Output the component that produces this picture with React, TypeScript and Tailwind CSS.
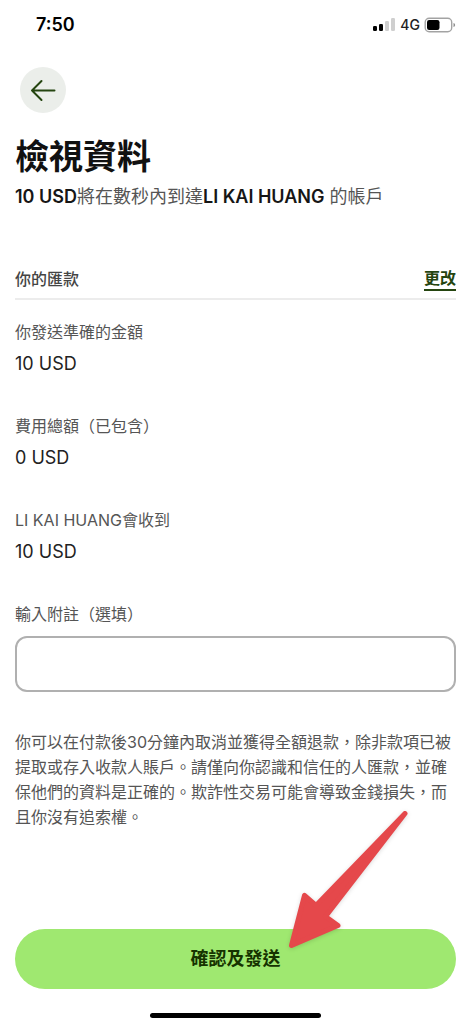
import { useState } from "react";

const DETAILS = [
  { label: "你發送準確的金額", value: "10 USD" },
  { label: "費用總額（已包含）", value: "0 USD" },
  { label: "LI KAI HUANG會收到", value: "10 USD" },
];

function StatusBar() {
  return (
    <div className="flex h-[50px] items-center justify-between pl-9 pr-3">
      <span className="text-lg font-semibold text-black">7:50</span>
      <div className="flex items-center gap-1">
        <svg width="24" height="14" viewBox="0 0 24 14" aria-hidden="true">
          <rect x="1" y="8" width="4" height="5" rx="1.2" fill="#000" />
          <rect x="7" y="6" width="4" height="7" rx="1.2" fill="#000" />
          <rect x="13" y="3" width="4" height="10" rx="1.2" fill="#cfcfcf" />
          <rect x="19" y="0" width="4" height="13" rx="1.2" fill="#cfcfcf" />
        </svg>
        <span className="text-sm font-medium text-[#222]">4G</span>
        <svg width="32" height="16" viewBox="0 0 32 16" aria-hidden="true">
          <rect x="1.2" y="1.2" width="26.5" height="13.6" rx="4" fill="none" stroke="#a3a3a3" strokeWidth="1.4" />
          <rect x="3" y="3" width="12.5" height="10" rx="2.2" fill="#000" />
          <path d="M29.5 6v4c1-.4 1.6-1.1 1.6-2s-.6-1.600-1.600-2z" fill="#8f8f8f" />
        </svg>
      </div>
    </div>
  );
}

function Pointer() {
  return (
    <svg
      className="pointer-events-none absolute bottom-10 left-[62%] h-[138px] w-[122px] drop-shadow-sm"
      viewBox="0 0 122 138"
      aria-hidden="true"
    >
      <path
        d="M117 2.500L28 94.500L16.500 84.500L3.500 134.500L50 114.500L37.500 105.500Z"
        fill="#e5484b"
        stroke="#e5484b"
        strokeWidth="5"
        strokeLinejoin="round"
      />
    </svg>
  );
}

export default function App() {
  const [note, setNote] = useState("");

  return (
    <div className="flex min-h-screen flex-col bg-white font-['Inter','Noto_Sans_CJK_TC',sans-serif] text-[#555]">
      <StatusBar />

      <main className="flex flex-col pl-[15px] pr-3">
        <button
          type="button"
          aria-label="返回"
          className="ml-[5px] mt-[17px] flex size-[46px] items-center justify-center rounded-full bg-[#ebeeea]"
        >
          <svg
            width="26"
            height="24"
            viewBox="0 0 26 24"
            fill="none"
            stroke="#254510"
            strokeWidth="2"
            strokeLinecap="round"
            strokeLinejoin="round"
            aria-hidden="true"
          >
            <path d="M24.500 12.500H2M11.500 3L2 12.500l9.500 9.500" />
          </svg>
        </button>

        <h1 className="mt-6 text-[34px] font-bold leading-10 text-[#111]">檢視資料</h1>
        <p className="mt-1.5 text-lg leading-7">
          <strong className="font-semibold text-[#161616]">10 USD</strong>
          將在數秒內到達
          <strong className="font-semibold text-[#161616]">LI KAI HUANG</strong> 的帳戶
        </p>

        <div className="mt-14 flex items-center justify-between border-b-2 border-[#ececec] pb-[7px] leading-6">
          <h2 className="font-medium text-[#444]">你的匯款</h2>
          <a href="#edit" className="border-b-2 border-[#254510] font-bold leading-[22px] text-[#254510]">
            更改
          </a>
        </div>

        <dl className="mt-[18px] flex flex-col gap-8">
          {DETAILS.map((d) => (
            <div key={d.label}>
              <dt className="leading-7">{d.label}</dt>
              <dd className="mt-0.5 text-lg leading-8 text-[#222]">{d.value}</dd>
            </div>
          ))}
        </dl>

        <label htmlFor="note" className="mt-8 leading-7">
          輸入附註（選填）
        </label>
        <input
          id="note"
          type="text"
          value={note}
          onChange={(e) => setNote(e.target.value)}
          className="mt-2 h-14 w-full rounded-xl border-2 border-[#b0b0b0] px-4 text-lg text-[#222] outline-none focus:border-[#254510]"
        />

        <p className="mt-[38px] leading-[25px]">
          你可以在付款後30分鐘內取消並獲得全額退款，除非款項已被提取或存入收款人賬戶。請僅向你認識和信任的人匯款，並確保他們的資料是正確的。欺詐性交易可能會導致金錢損失，而且你沒有追索權。
        </p>
      </main>

      <footer className="mt-auto flex flex-col pb-1.5 pl-[15px] pr-3 pt-8">
        <div className="relative">
          <button
            type="button"
            className="h-[60px] w-full rounded-full bg-[#9fe870] text-lg font-bold text-[#163300]"
          >
            確認及發送
          </button>
          <Pointer />
        </div>
        <div className="mt-6 h-[5px] w-[171px] self-center rounded-full bg-black" />
      </footer>
    </div>
  );
}
